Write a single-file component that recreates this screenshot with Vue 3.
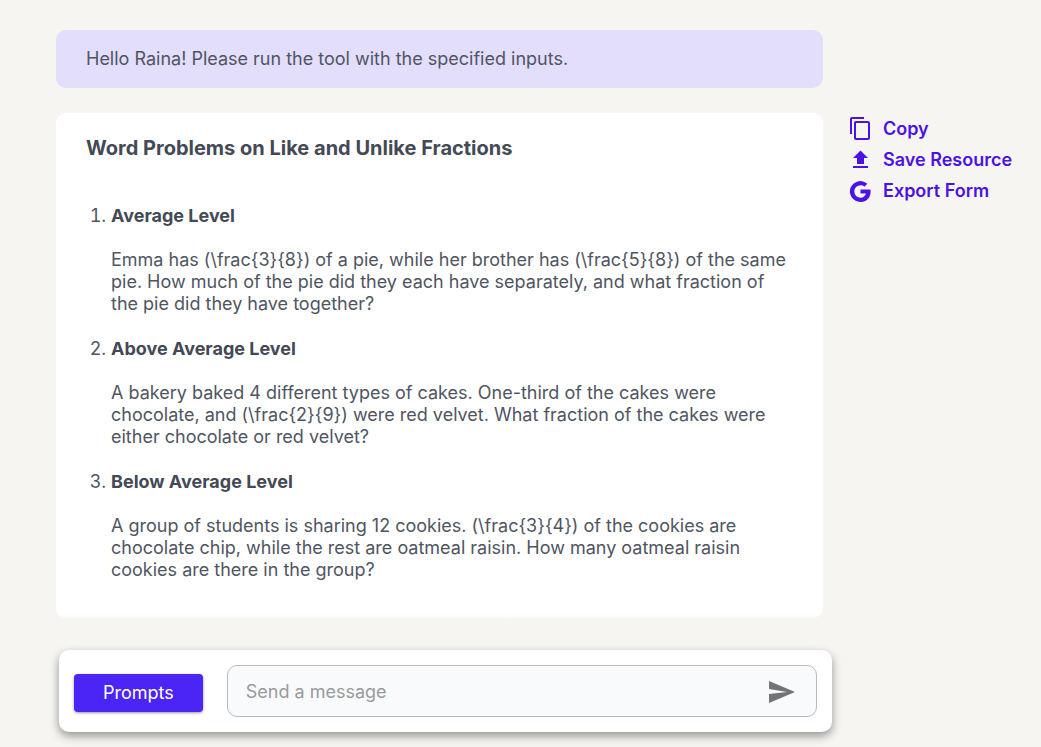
<script setup>
import { ref } from 'vue'

const message = ref('')

const problems = [
  {
    level: 'Average Level',
    text: 'Emma has (\\frac{3}{8}) of a pie, while her brother has (\\frac{5}{8}) of the same pie. How much of the pie did they each have separately, and what fraction of the pie did they have together?',
  },
  {
    level: 'Above Average Level',
    text: 'A bakery baked 4 different types of cakes. One-third of the cakes were chocolate, and (\\frac{2}{9}) were red velvet. What fraction of the cakes were either chocolate or red velvet?',
  },
  {
    level: 'Below Average Level',
    text: 'A group of students is sharing 12 cookies. (\\frac{3}{4}) of the cookies are chocolate chip, while the rest are oatmeal raisin. How many oatmeal raisin cookies are there in the group?',
  },
]
</script>

<template>
  <div class="page">
    <main class="chat">
      <p class="greeting">Hello Raina! Please run the tool with the specified inputs.</p>

      <div class="result">
        <article class="card">
          <h1>Word Problems on Like and Unlike Fractions</h1>
          <ol>
            <li v-for="problem in problems" :key="problem.level">
              <h2>{{ problem.level }}</h2>
              <p>{{ problem.text }}</p>
            </li>
          </ol>
        </article>

        <aside class="actions">
          <button type="button">
            <svg viewBox="0 0 24 24" width="24" height="24" aria-hidden="true">
              <path d="M16 0H4c-1.100 0-2 .9-2 2v15h2V2h12V0zM20 4H8c-1.100 0-2 .9-2 2v15c0 1.100.9 2 2 2h12c1.100 0 2-.9 2-2V6c0-1.100-.9-2-2-2zm0 17H8V6h12v15z" />
            </svg>
            Copy
          </button>
          <button type="button">
            <svg viewBox="0 0 24 24" width="24" height="24" aria-hidden="true">
              <path d="M9 16h7v-6h4l-7.500-7.500L5 10h4v6zm-4 2h15v2H5v-2z" />
            </svg>
            Save Resource
          </button>
          <button type="button">
            <svg viewBox="0 0 24 24" width="24" height="24" aria-hidden="true">
              <path d="M12.500 10.500v4h5.500c-.8 2.600-2.700 4.200-5.500 4.200a6.200 6.200 0 1 1 0-12.400c1.500 0 2.900.5 3.900 1.400l2.900-2.900A10.400 10.400 0 1 0 12.500 22.900c8.600 0 10.900-7.600 9.900-12.400z" />
            </svg>
            Export Form
          </button>
        </aside>
      </div>
    </main>

    <form class="composer" @submit.prevent>
      <button type="button" class="prompts">Prompts</button>
      <div class="field">
        <input v-model="message" type="text" placeholder="Send a message" aria-label="Send a message" />
        <button type="submit" class="send" aria-label="Send">
          <svg viewBox="0 0 26 24" width="26" height="24" aria-hidden="true">
            <path d="M0 2v8l18 3-18 2v9l26-11z" />
          </svg>
        </button>
      </div>
    </form>
  </div>
</template>

<style>
body {
  background: #f6f5f2;
}
</style>

<style scoped>
.page {
  box-sizing: border-box;
  min-height: 100vh;
  padding: 30px 32px 15px 56px;
  background: #f6f5f2;
  color: #505562;
  font-family: Inter, "Liberation Sans", sans-serif;
  font-size: 18px;
  line-height: 22px;
}

.greeting {
  margin: 0 186px 25px 0;
  padding: 18px 30px;
  border-radius: 10px;
  background: #e3defc;
}

.result {
  display: grid;
  grid-template-columns: minmax(0, 1fr) 161px;
  gap: 25px;
}

.card {
  padding: 24px 30px 37px;
  border-radius: 10px;
  background: linear-gradient(#fff calc(100% - 4px), #fafaf8);
}

h1 {
  margin: 0 0 46px;
  color: #434955;
  font-size: 20px;
  font-weight: 700;
  line-height: 22px;
}

ol {
  margin: 0;
  padding-left: 25px;
}

li + li {
  margin-top: 23px;
}

h2 {
  margin: 0 0 22px;
  color: #434955;
  font-size: 18px;
  font-weight: 700;
  line-height: 22px;
}

li p {
  margin: 0;
}

button {
  border: 0;
  font: inherit;
  cursor: pointer;
}

svg {
  display: block;
  flex: none;
  fill: currentColor;
}

.actions {
  display: flex;
  flex-direction: column;
  align-items: flex-start;
  gap: 7px;
  padding-top: 4px;
}

.actions button {
  display: flex;
  align-items: center;
  gap: 11px;
  padding: 0;
  background: none;
  color: #4a12e6;
  font-weight: 600;
  white-space: nowrap;
}

.composer {
  display: flex;
  align-items: center;
  gap: 24px;
  margin: 32px 177px 0 3px;
  padding: 15px;
  border-radius: 10px;
  background: #fff;
  box-shadow: 0 4px 10px rgba(0, 0, 0, 0.4);
}

.prompts {
  flex: none;
  margin-top: 4px;
  padding: 8px 29px;
  border-radius: 4px;
  background: #4b25f5;
  box-shadow: 0 1px 3px rgba(0, 0, 0, 0.4);
  color: #fff;
}

.field {
  display: flex;
  flex: 1;
  align-items: center;
  min-width: 0;
  padding: 0 21px 0 18px;
  border: 1px solid #b9bbbe;
  border-radius: 10px;
  background: #f9fafc;
}

input {
  flex: 1;
  min-width: 0;
  height: 50px;
  padding: 0;
  border: 0;
  outline: 0;
  background: none;
  color: #505562;
  font: inherit;
}

input::placeholder {
  color: #999a9d;
  opacity: 1;
}

.send {
  padding: 0;
  background: none;
  color: #737477;
}
</style>
